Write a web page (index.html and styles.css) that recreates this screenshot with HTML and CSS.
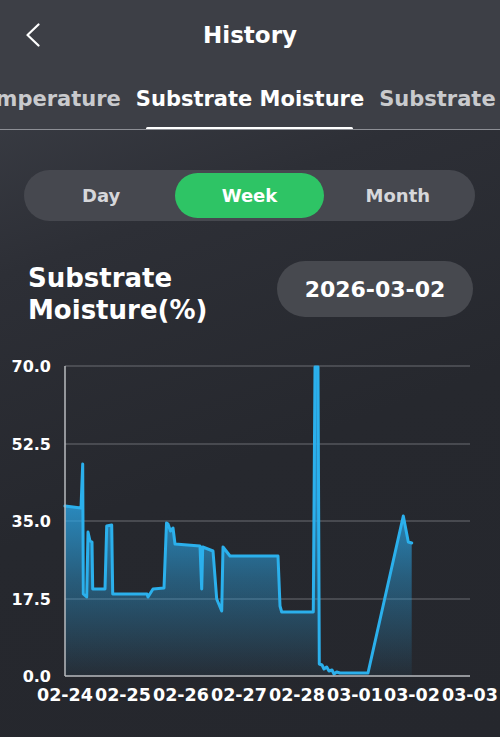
FILE: index.html
```html
<!DOCTYPE html>
<html lang="en">
<head>
  <meta charset="UTF-8" />
  <title>History</title>
  <link rel="stylesheet" href="styles.css">
</head>
<body>
  <div class="app">
    <header class="topbar">
      <button class="back" aria-label="Back">
        <svg width="16" height="24" viewBox="0 0 16 24"><path d="M13.5 1.5 L2.5 12 L13.5 22.5" fill="none" stroke="#fff" stroke-width="2.2" stroke-linecap="round" stroke-linejoin="round"/></svg>
      </button>
      <h1>History</h1>
    </header>

    <nav class="tabs">
      <div class="tab-side left"><span class="tab">Temperature</span></div>
      <span class="tab active">Substrate Moisture</span>
      <div class="tab-side right"><span class="tab">Substrate EC</span></div>
    </nav>

    <main class="content">
      <div class="segment">
        <span class="seg">Day</span>
        <span class="seg active">Week</span>
        <span class="seg">Month</span>
      </div>

      <div class="chart-head">
        <h2>Substrate<br>Moisture(%)</h2>
        <div class="date-pill">2026-03-02</div>
      </div>

      <div class="chart">
        <svg width="500" height="380" viewBox="0 357 500 380">
          <defs>
            <linearGradient id="fill" gradientUnits="userSpaceOnUse" x1="0" y1="500" x2="0" y2="677">
              <stop offset="0" stop-color="#2aa6e8" stop-opacity="0.8"/>
              <stop offset="0.45" stop-color="#2aa6e8" stop-opacity="0.42"/>
              <stop offset="1" stop-color="#2aa6e8" stop-opacity="0.05"/>
            </linearGradient>
          </defs>

          <g class="grid">
            <line x1="65" y1="367" x2="470" y2="367"/>
            <line x1="65" y1="445" x2="470" y2="445"/>
            <line x1="65" y1="522" x2="470" y2="522"/>
            <line x1="65" y1="600" x2="470" y2="600"/>
          </g>

          <polygon class="area" points="65,677 65,507 81,509 82.7,465 83.3,595 86.7,598 88,533 90,542 92,543 92.7,590 105,590 106.7,527 111.7,526 112.7,595 147,595 148,598 153,590 164,589 166.5,524 168,525 170.5,532 173,529 175,545 200,547 201.7,590 202.7,548 213,552 216.7,600 221.7,612 223,548 230,557 278,557 280,607 281.7,613 313.3,613 315,368 318,368 319.3,665 322,666 324,670 326.7,668 329,672 332,671 334,675 336.7,673 340,674 368,674 403.3,517 408.3,543 411.7,544 411.7,677"/>

          <polyline class="line" points="65,507 81,509 82.7,465 83.3,595 86.7,598 88,533 90,542 92,543 92.7,590 105,590 106.7,527 111.7,526 112.7,595 147,595 148,598 153,590 164,589 166.5,524 168,525 170.5,532 173,529 175,545 200,547 201.7,590 202.7,548 213,552 216.7,600 221.7,612 223,548 230,557 278,557 280,607 281.7,613 313.3,613 315,368 318,368 319.3,665 322,666 324,670 326.7,668 329,672 332,671 334,675 336.7,673 340,674 368,674 403.3,517 408.3,543 411.7,544"/>

          <line class="axis" x1="65" y1="367" x2="65" y2="677"/>
          <line class="axis" x1="65" y1="677" x2="470" y2="677"/>

          <g class="ylabels">
            <text x="51" y="373">70.0</text>
            <text x="51" y="451">52.5</text>
            <text x="51" y="528">35.0</text>
            <text x="51" y="606">17.5</text>
            <text x="51" y="683">0.0</text>
          </g>
          <g class="xlabels">
            <text x="65" y="702">02-24</text>
            <text x="123" y="702">02-25</text>
            <text x="181" y="702">02-26</text>
            <text x="239" y="702">02-27</text>
            <text x="297" y="702">02-28</text>
            <text x="355" y="702">03-01</text>
            <text x="412" y="702">03-02</text>
            <text x="470" y="702">03-03</text>
          </g>
        </svg>
      </div>
    </main>
  </div>
</body>
</html>
```

FILE: styles.css
```css
* {
  box-sizing: border-box;
}

html, body {
  margin: 0;
  padding: 0;
}

body {
  font-family: "DejaVu Sans", "Inter", sans-serif;
  background-color: #26282e;
  color: #fff;
  width: 500px;
  height: 737px;
  overflow: hidden;
}

.app {
  min-height: 737px;
  background: linear-gradient(160deg, #40434b 0%, #2d2f36 30%, #26282e 60%, #25272d 100%);
}

.topbar {
  position: relative;
  height: 70px;
  display: flex;
  align-items: center;
  justify-content: center;
  background-color: #3d3f46;
}

.topbar h1 {
  margin: 0;
  font-size: 23px;
  font-weight: 700;
}

.back {
  position: absolute;
  left: 25px;
  top: 23px;
  background: none;
  border: none;
  padding: 0;
  cursor: pointer;
}

.tabs {
  height: 60px;
  display: grid;
  grid-template-columns: 1fr auto 1fr;
  column-gap: 15px;
  align-items: center;
  background-color: #3d3f46;
  border-bottom: 1px solid #8d8f95;
  overflow: hidden;
}

.tab-side {
  display: flex;
  overflow: hidden;
  white-space: nowrap;
}

.tab-side.left {
  justify-content: flex-end;
}

.tab-side.right {
  justify-content: flex-start;
}

.tab {
  font-size: 21px;
  font-weight: 700;
  color: #c9cacd;
  white-space: nowrap;
  padding-bottom: 2px;
}

.tab.active {
  position: relative;
  color: #fff;
  align-self: stretch;
  display: flex;
  align-items: center;
}

.tab.active::after {
  content: "";
  position: absolute;
  left: 10px;
  right: 11px;
  bottom: -1px;
  height: 3px;
  border-radius: 2px;
  background-color: #fff;
}

.content {
  padding-top: 40px;
}

.segment {
  margin: 0 25px 0 24px;
  height: 51px;
  padding: 3px;
  border-radius: 26px;
  background-color: #46484f;
  display: grid;
  grid-template-columns: 1fr 1fr 1fr;
}

.seg {
  display: flex;
  align-items: center;
  justify-content: center;
  border-radius: 23px;
  font-size: 18px;
  font-weight: 700;
  color: #d6d7da;
}

.seg.active {
  background-color: #2ec465;
  color: #fff;
}

.chart-head {
  margin-top: 41px;
  padding: 0 27px 0 28px;
  display: flex;
  justify-content: space-between;
  align-items: flex-start;
}

.chart-head h2 {
  margin: 0;
  font-size: 26px;
  line-height: 32px;
  font-weight: 700;
}

.date-pill {
  width: 196px;
  height: 56px;
  border-radius: 28px;
  background-color: #47494f;
  display: flex;
  align-items: center;
  justify-content: center;
  font-size: 22px;
  font-weight: 700;
  margin-top: -1px;
}

.chart {
  margin-top: 30px;
}

.chart svg {
  display: block;
}

.grid line {
  stroke: #6b6d73;
  stroke-width: 1;
}

.axis {
  stroke: #b9bbbf;
  stroke-width: 1.5;
}

.area {
  fill: url(#fill);
}

.line {
  fill: none;
  stroke: #2bb0ec;
  stroke-width: 3;
  stroke-linejoin: round;
  stroke-linecap: round;
}

.ylabels text {
  font-family: "DejaVu Sans", sans-serif;
  font-size: 16px;
  font-weight: 700;
  fill: #fff;
  text-anchor: end;
}

.xlabels text {
  font-family: "DejaVu Sans", sans-serif;
  font-size: 17.5px;
  font-weight: 700;
  fill: #fff;
  text-anchor: middle;
}
```
